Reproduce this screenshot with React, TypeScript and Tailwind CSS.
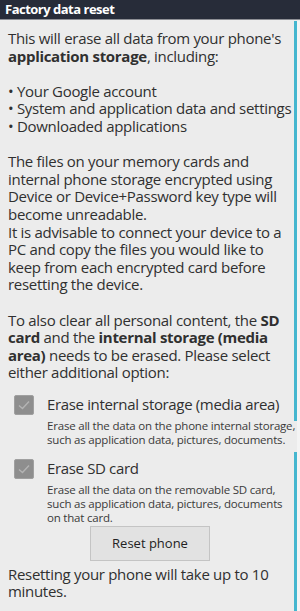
import React from "react";

function CheckBox() {
  return (
    <div className="w-[20px] h-[20px] shrink-0 rounded-[2px] bg-[#8e8e8e] border border-[#a0a0a0] flex items-center justify-center">
      <svg width="14" height="12" viewBox="0 0 14 12" fill="none">
        <path d="M2 6.5 L5.5 9.5 L12 2.5" stroke="#b4b4b4" strokeWidth="1.4" />
      </svg>
    </div>
  );
}

function Lines({ lines }: { lines: React.ReactNode[] }) {
  return (
    <>
      {lines.map((l, i) => (
        <div key={i} className="whitespace-nowrap">
          {l}
        </div>
      ))}
    </>
  );
}

function Option({ title, desc }: { title: string; desc: string[] }) {
  return (
    <div className="flex pl-[14px] gap-[13px]">
      <div className="pt-[1px]">
        <CheckBox />
      </div>
      <div>
        <div className="text-[15px] leading-[20px] tracking-[-0.35px] whitespace-nowrap">{title}</div>
        <div className="text-[11.5px] leading-[14px] mt-[5px] tracking-[-0.2px] text-[#3a3a3a]">
          <Lines lines={desc} />
        </div>
      </div>
    </div>
  );
}

export default function App() {
  return (
    <div
      className="relative w-[300px] h-[611px] overflow-hidden bg-[#ececec] text-[#303030]"
      style={{ fontFamily: '"Open Sans", "DejaVu Sans", sans-serif' }}
    >
      <div className="h-[20px] bg-[#272c39] border-b border-[#8d8f95] flex items-center pl-[5px]">
        <span className="text-white font-bold text-[13px] tracking-[-0.5px] leading-none">
          Factory data reset
        </span>
      </div>

      <div className="pl-[8px] pt-[10px] text-[15px] leading-[17.6px] tracking-[-0.3px]">
        <Lines
          lines={[
            "This will erase all data from your phone's",
            <>
              <b>application storage</b>, including:
            </>,
          ]}
        />
        <div className="mt-[17.6px]">
          <Lines
            lines={[
              "• Your Google account",
              "• System and application data and settings",
              "• Downloaded applications",
            ]}
          />
        </div>
        <div className="mt-[17.6px]">
          <Lines
            lines={[
              "The files on your memory cards and",
              "internal phone storage encrypted using",
              "Device or Device+Password key type will",
              "become unreadable.",
              "It is advisable to connect your device to a",
              "PC and copy the files you would like to",
              "keep from each encrypted card before",
              "resetting the device.",
            ]}
          />
        </div>
        <div className="mt-[17.6px]">
          <Lines
            lines={[
              <>
                To also clear all personal content, the <b>SD</b>
              </>,
              <>
                <b>card</b> and the <b>internal storage (media</b>
              </>,
              <>
                <b>area)</b> needs to be erased. Please select
              </>,
              "either additional option:",
            ]}
          />
        </div>
      </div>

      <div className="mt-[12px] flex flex-col gap-[11px]">
        <Option
          title="Erase internal storage (media area)"
          desc={["Erase all the data on the phone internal storage,", "such as application data, pictures, documents."]}
        />
        <Option
          title="Erase SD card"
          desc={[
            "Erase all the data on the removable SD card,",
            "such as application data, pictures, documents",
            "on that card.",
          ]}
        />
      </div>

      <div className="flex justify-center mt-[1px]">
        <button className="w-[120px] h-[35px] bg-[#e2e2e2] border border-[#c4c4c4] text-[13px] text-[#222]">
          Reset phone
        </button>
      </div>

      <div className="pl-[8px] mt-[5px] text-[15px] leading-[17.6px] tracking-[-0.3px]">
        <Lines lines={["Resetting your phone will take up to 10", "minutes."]} />
      </div>

      <div className="absolute right-[3px] top-[21px] w-[3px] h-[400px] bg-[#45b6cf]" />
      <div className="absolute right-[3px] top-[452px] w-[3px] h-[159px] bg-[#45b6cf]" />
      <div className="absolute right-0 top-[21px] w-[3px] bottom-0 bg-[#f4f4f4]" />
    </div>
  );
}
